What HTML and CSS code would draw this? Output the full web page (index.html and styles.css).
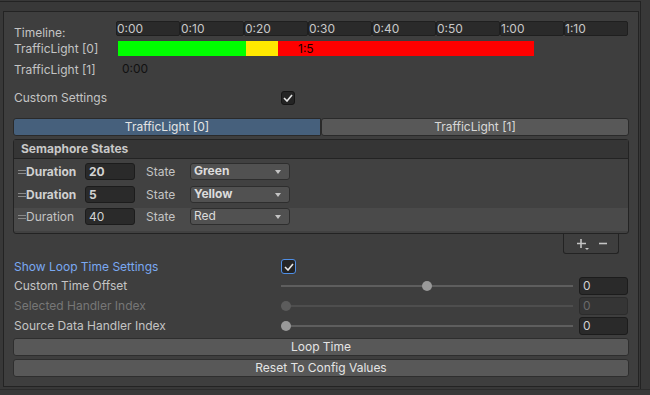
FILE: index.html
```html
<!DOCTYPE html>
<html lang="en">
<head>
    <meta charset="UTF-8">
    <title>Traffic Light Inspector</title>
    <link rel="stylesheet" href="styles.css">
</head>
<body>
    <div class="window">
        <div class="panel">
            <div class="row timeline-row">
                <div class="label">Timeline:</div>
                <div class="ticks">
                    <span>0:00</span><span>0:10</span><span>0:20</span><span>0:30</span>
                    <span>0:40</span><span>0:50</span><span>1:00</span><span>1:10</span>
                </div>
            </div>

            <div class="row light-row first">
                <div class="label">TrafficLight [0]</div>
                <div class="bar">
                    <div class="seg green" style="width:128px"></div>
                    <div class="seg yellow" style="width:32px"></div>
                    <div class="seg red" style="width:256px"><span>1:5</span></div>
                </div>
            </div>

            <div class="row light-row second">
                <div class="label">TrafficLight [1]</div>
                <div class="empty-time">0:00</div>
            </div>

            <div class="row prop-row settings-row">
                <div class="label wide">Custom Settings</div>
                <div class="checkbox">
                    <svg width="10" height="8" viewBox="0 0 10 8"><polyline points="1,4 4,7 9,1" fill="none" stroke="#e6e6e6" stroke-width="1.6"/></svg>
                </div>
            </div>

            <div class="tabs">
                <div class="tab active">TrafficLight [0]</div>
                <div class="tab">TrafficLight [1]</div>
            </div>

            <div class="list-box">
                <div class="list-header">Semaphore States</div>
                <div class="list-body">
                    <div class="list-item">
                        <span class="grip"></span>
                        <span class="item-label bold">Duration</span>
                        <div class="field bold">20</div>
                        <span class="item-label state">State</span>
                        <div class="dropdown bold">Green<span class="arrow"></span></div>
                    </div>
                    <div class="list-item">
                        <span class="grip"></span>
                        <span class="item-label bold">Duration</span>
                        <div class="field bold">5</div>
                        <span class="item-label state">State</span>
                        <div class="dropdown bold">Yellow<span class="arrow"></span></div>
                    </div>
                    <div class="list-item selected">
                        <span class="grip"></span>
                        <span class="item-label">Duration</span>
                        <div class="field">40</div>
                        <span class="item-label state">State</span>
                        <div class="dropdown">Red<span class="arrow"></span></div>
                    </div>
                </div>
            </div>
            <div class="list-footer">
                <svg width="14" height="12" viewBox="0 0 14 12"><path d="M5 1v9M1 5.5h9" stroke="#c4c4c4" stroke-width="1.6"/><path d="M9 10h4l-2 2z" fill="#c4c4c4"/></svg>
                <svg width="10" height="12" viewBox="0 0 10 12"><path d="M1 5.5h8" stroke="#c4c4c4" stroke-width="1.6"/></svg>
            </div>

            <div class="row prop-row loop-row">
                <div class="label wide focused">Show Loop Time Settings</div>
                <div class="checkbox focus">
                    <svg width="10" height="8" viewBox="0 0 10 8"><polyline points="1,4 4,7 9,1" fill="none" stroke="#e6e6e6" stroke-width="1.6"/></svg>
                </div>
            </div>

            <div class="row slider-row">
                <div class="label wide">Custom Time Offset</div>
                <div class="slider"><span class="thumb" style="left:50%"></span></div>
                <div class="field num">0</div>
            </div>
            <div class="row slider-row disabled">
                <div class="label wide">Selected Handler Index</div>
                <div class="slider"><span class="thumb" style="left:0%"></span></div>
                <div class="field num">0</div>
            </div>
            <div class="row slider-row">
                <div class="label wide">Source Data Handler Index</div>
                <div class="slider"><span class="thumb" style="left:0%"></span></div>
                <div class="field num">0</div>
            </div>

            <button class="btn first-btn">Loop Time</button>
            <button class="btn">Reset To Config Values</button>
        </div>
    </div>
    <div class="bottom-strip"></div>
</body>
</html>
```

FILE: styles.css
```css
* {
    box-sizing: border-box;
}
body {
    margin: 0;
    background-color: #383838;
    font-family: Inter, "Noto Sans", sans-serif;
    font-size: 12px;
    color: #c4c4c4;
    width: 650px;
    height: 395px;
    overflow: hidden;
}
.window {
    margin-top: 1px;
    width: 641px;
    border-top: 1px solid #232323;
    border-right: 1px solid #232323;
    padding: 9px 1px 2px 3px;
}
.panel {
    height: 376px;
    background: #3e3e3e;
    border: 1px solid #232323;
    padding: 9px 9px 0 9px;
}
.row {
    display: flex;
    height: 18px;
    line-height: 18px;
}
.label {
    width: 103px;
    padding-left: 1px;
    white-space: nowrap;
}
.label.wide {
    width: 268px;
}
.focused {
    color: #7aa9f2;
}
.disabled .label {
    color: #777;
}

/* timeline */
.timeline-row {
    height: 17px;
}
.timeline-row .label {
    line-height: 14px;
    padding-top: 5px;
}
.ticks {
    display: flex;
    height: 15px;
}
.ticks span {
    width: 64px;
    height: 15px;
    line-height: 14px;
    background: #2a2a2a;
    border: 1px solid #1f1f1f;
    border-radius: 2px;
    color: #c8c8c8;
    font-size: 12px;
    padding-left: 0;
}
.light-row.first {
    margin-top: 2px;
}
.light-row.second {
    margin-top: 3px;
}
.bar {
    display: flex;
    margin-top: 1px;
    margin-left: 2px;
    height: 15px;
}
.seg {
    height: 15px;
}
.green {
    background: #00ff00;
}
.yellow {
    background: #ffe800;
}
.red {
    background: #ff0000;
    color: #1a0000;
    line-height: 15px;
    padding-left: 20px;
}
.empty-time {
    color: #111;
    padding-left: 6px;
    line-height: 16px;
}

/* checkbox */
.settings-row {
    margin-top: 10px;
}
.checkbox {
    width: 14px;
    height: 14px;
    margin-top: 2px;
    background: #242424;
    border: 1px solid #161616;
    border-radius: 3px;
    display: flex;
    align-items: center;
    justify-content: center;
}
.checkbox.focus {
    border-color: #4f8fe6;
    width: 15px;
    height: 15px;
    margin-top: 1px;
}

/* tabs */
.tabs {
    display: flex;
    margin-top: 11px;
    height: 18px;
}
.tab {
    flex: 1;
    text-align: center;
    line-height: 16px;
    background: #585858;
    border: 1px solid #2a2a2a;
    border-radius: 3px;
    color: #d8d8d8;
}
.tab.active {
    background: #46607c;
    color: #e4e4e4;
    border-radius: 3px 0 0 3px;
}

/* reorderable list */
.list-box {
    margin-top: 3px;
    border: 1px solid #232323;
    border-radius: 3px;
    background: #414141;
}
.list-header {
    height: 19px;
    line-height: 18px;
    background: #353535;
    border-bottom: 1px solid #232323;
    font-weight: bold;
    padding-left: 7px;
    color: #c8c8c8;
}
.list-body {
    padding: 3px 0 2px;
}
.list-item {
    display: flex;
    align-items: flex-start;
    height: 23px;
    padding-top: 1px;
    line-height: 17px;
}
.list-item.selected {
    background: #4a4a4a;
    padding-top: 0;
    margin-top: 0;
}
.grip {
    width: 8px;
    height: 4px;
    margin: 7px 0 0 4px;
    border-top: 1px solid #8a8a8a;
    border-bottom: 1px solid #8a8a8a;
}
.item-label {
    width: 59px;
    color: #c4c4c4;
}
.item-label.state {
    width: 44px;
    margin-left: 11px;
}
.bold {
    font-weight: bold;
}
.list-item .item-label.bold {
    color: #d0d0d0;
}
.field {
    width: 50px;
    height: 17px;
    background: #2a2a2a;
    border: 1px solid #1c1c1c;
    border-radius: 3px;
    padding-left: 3px;
    line-height: 15px;
    color: #d2d2d2;
}
.dropdown {
    position: relative;
    width: 100px;
    height: 17px;
    background: #515151;
    border: 1px solid #2e2e2e;
    border-radius: 3px;
    padding-left: 3px;
    line-height: 14px;
    color: #dcdcdc;
}
.arrow {
    position: absolute;
    right: 8px;
    top: 6px;
    border-left: 3px solid transparent;
    border-right: 3px solid transparent;
    border-top: 4px solid #c4c4c4;
}
.list-footer {
    width: 56px;
    height: 20px;
    margin: 0 10px 0 auto;
    border: 1px solid #232323;
    border-top: none;
    border-radius: 0 0 3px 3px;
    display: flex;
    justify-content: center;
    align-items: center;
    gap: 8px;
    padding-left: 2px;
}

/* sliders */
.loop-row {
    margin-top: 4px;
}
.slider-row {
    margin-top: 2px;
    height: 18px;
}
.loop-row + .slider-row {
    margin-top: 1px;
}
.slider {
    position: relative;
    width: 292px;
    height: 18px;
}
.slider::before {
    content: "";
    position: absolute;
    left: 0;
    right: 0;
    top: 8px;
    height: 2px;
    background: #5e5e5e;
}
.thumb {
    position: absolute;
    top: 4px;
    width: 10px;
    height: 10px;
    margin-left: 0;
    border-radius: 50%;
    background: #999;
}
.slider .thumb[style*="50%"] {
    margin-left: -5px;
}
.disabled .slider::before {
    background: #4e4e4e;
}
.disabled .thumb {
    background: #5c5c5c;
}
.field.num {
    margin-left: 6px;
    width: 49px;
    height: 18px;
    line-height: 16px;
}
.disabled .field.num {
    background: #353535;
    border-color: #2c2c2c;
    color: #6a6a6a;
}

/* buttons */
.btn {
    display: block;
    width: 100%;
    height: 18px;
    margin-top: 3px;
    padding: 0;
    background: #585858;
    border: 1px solid #2e2e2e;
    border-radius: 3px;
    color: #e4e4e4;
    font-family: Inter, "Noto Sans", sans-serif;
    font-size: 12px;
    line-height: 16px;
}
.first-btn {
    margin-top: 3px;
}
.bottom-strip {
    margin-top: 0;
    border-top: 1px solid #2c2c2c;
    height: 6px;
    background: #383838;
}
```
